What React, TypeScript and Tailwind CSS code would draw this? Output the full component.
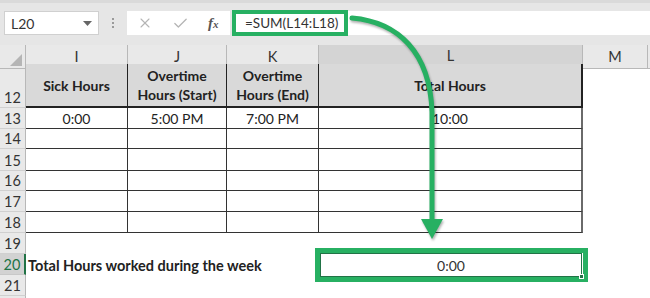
import { X, Check } from "lucide-react";

const grid = "grid grid-cols-[26px_102px_99px_92px_264px_65px_1fr]";

type Row = { n: number; h: string; vals?: string[] };

const tableRows: Row[] = [
  { n: 13, h: "h-[21px]", vals: ["0:00", "5:00 PM", "7:00 PM", "10:00"] },
  { n: 14, h: "h-[20px]" },
  { n: 15, h: "h-[22px]" },
  { n: 16, h: "h-[20px]" },
  { n: 17, h: "h-[21px]" },
  { n: 18, h: "h-[21px]" },
];

function RowHead({ n, active }: { n: number; active?: boolean }) {
  return (
    <div
      className={
        active
          ? "flex items-end justify-center bg-[#d2d2d2] text-[#217346] border-r-2 border-r-[#217346] border-b border-b-[#c8c8c8] text-[14.5px] leading-[19px]"
          : "flex items-end justify-center bg-[#e9e9e9] text-[#333] border-r border-r-[#b8b8b8] border-b border-b-[#d0d0d0] text-[14.5px] leading-[19px]"
      }
    >
      {n}
    </div>
  );
}

function ColHead({ label, active }: { label: string; active?: boolean }) {
  return (
    <div
      className={
        active
          ? "flex items-center justify-center bg-[#d4d4d4] text-[#333] border-r border-r-[#b8b8b8] border-b-2 border-b-[#217346] text-[14.5px]"
          : "flex items-center justify-center bg-[#e9e9e9] text-[#333] border-r border-r-[#b8b8b8] border-b border-b-[#b8b8b8] text-[14.5px]"
      }
    >
      {label}
    </div>
  );
}

export default function App() {
  return (
    <div className="relative w-[650px] h-[298px] overflow-hidden bg-white font-['Lato','Open_Sans',sans-serif] text-[#222]">
      {/* formula bar */}
      <div className="h-[45px] bg-[#e6e6e6] border-t-[3px] border-t-[#dadada] flex items-start pt-[8px]">
        <div className="ml-[4px] w-[95px] h-[24px] bg-white border border-[#d0d0d0] flex items-center justify-between pl-[6px] pr-[6px] text-[14px] text-[#333]">
          <span>L20</span>
          <svg width="9" height="5" viewBox="0 0 9 5">
            <path d="M0 0 L9 0 L4.5 5 Z" fill="#666" />
          </svg>
        </div>
        <div className="w-[28px] h-[24px] flex flex-col items-center justify-center gap-[2px]">
          <span className="w-[2px] h-[2px] bg-[#9a9a9a]" />
          <span className="w-[2px] h-[2px] bg-[#9a9a9a]" />
          <span className="w-[2px] h-[2px] bg-[#9a9a9a]" />
        </div>
        <div className="w-[103px] h-[24px] bg-white flex items-center pl-[10px] gap-[19px]">
          <X size={16} strokeWidth={1.6} className="text-[#b5b5b5]" />
          <Check size={17} strokeWidth={1.8} className="text-[#b5b5b5]" />
          <span className="font-['Liberation_Serif',serif] italic font-bold text-[15px] text-[#555] leading-none">
            f<span className="text-[11px]">x</span>
          </span>
        </div>
        <div className="ml-[2px] flex-1 h-[24px] bg-white">
          <div className="-mt-[1px] w-[116px] h-[26px] border-[4px] border-[#27b062] flex items-center pl-[9px] text-[13.5px] text-[#333]">
            =SUM(L14:L18)
          </div>
        </div>
      </div>

      {/* column headers */}
      <div className={`${grid} h-[19px]`}>
        <div className="relative bg-[#e9e9e9] border-r border-r-[#b8b8b8] border-b border-b-[#b8b8b8]">
          <svg className="absolute right-[3px] bottom-[2px]" width="12" height="12" viewBox="0 0 12 12">
            <path d="M12 0 L12 12 L0 12 Z" fill="#b5b5b5" />
          </svg>
        </div>
        <ColHead label="I" />
        <ColHead label="J" />
        <ColHead label="K" />
        <ColHead label="L" active />
        <ColHead label="M" />
        <div className="bg-[#e9e9e9] border-b border-b-[#b8b8b8]" />
      </div>

      {/* header row 12 */}
      <div className={`${grid} h-[44px]`}>
        <RowHead n={12} />
        <div className="flex items-center justify-center bg-[#d9d9d9] border-r border-r-[#222] border-b-2 border-b-[#222] font-bold text-[14px] text-center leading-[19px]">
          Sick Hours
        </div>
        <div className="flex items-center justify-center bg-[#d9d9d9] border-r border-r-[#222] border-b-2 border-b-[#222] font-bold text-[14px] text-center leading-[19px]">
          Overtime
          <br />
          Hours (Start)
        </div>
        <div className="flex items-center justify-center bg-[#d9d9d9] border-r border-r-[#222] border-b-2 border-b-[#222] font-bold text-[14px] text-center leading-[19px]">
          Overtime
          <br />
          Hours (End)
        </div>
        <div className="flex items-center justify-center bg-[#d9d9d9] border-r-2 border-r-[#222] border-b-2 border-b-[#222] font-bold text-[14px] text-center leading-[19px]">
          Total Hours
        </div>
        <div />
        <div />
      </div>

      {/* body rows */}
      {tableRows.map((r) => (
        <div key={r.n} className={`${grid} ${r.h}`}>
          <RowHead n={r.n} />
          {[0, 1, 2, 3].map((i) => (
            <div
              key={i}
              className={
                i === 3
                  ? "flex items-end justify-center border-r-2 border-r-[#6a6a6a] border-b border-b-[#333] text-[14px] leading-[19px]"
                  : "flex items-end justify-center border-r border-r-[#333] border-b border-b-[#333] text-[14px] leading-[19px]"
              }
            >
              {r.vals?.[i]}
            </div>
          ))}
          <div />
          <div />
        </div>
      ))}

      <div className={`${grid} h-[21px]`}>
        <RowHead n={19} />
      </div>

      <div className={`${grid} h-[21px]`}>
        <RowHead n={20} active />
        <div className="col-span-3 flex items-end pl-[2px] font-bold text-[14.5px] leading-[19px] whitespace-nowrap">
          Total Hours worked during the week
        </div>
        <div className="relative flex items-end justify-center text-[14px] leading-[19px] text-[#333]">
          <div className="absolute -left-[4px] -right-[5px] -top-[6px] -bottom-[7px] border-[5px] border-[#27b062]" />
          <div className="absolute left-[1px] right-[1px] top-[-1px] bottom-[-2px] border border-[#217346]" />
          <div className="absolute -right-[1px] -bottom-[4px] w-[5px] h-[5px] bg-[#217346] border border-white" />
          0:00
        </div>
      </div>

      <div className={`${grid} h-[21px]`}>
        <RowHead n={21} />
      </div>
      <div className={`${grid} h-[10px]`}>
        <div className="bg-[#e9e9e9] border-r border-r-[#b8b8b8]" />
      </div>

      {/* annotation arrow */}
      <svg className="absolute inset-0 pointer-events-none drop-shadow-[1px_2px_1px_rgba(0,0,0,0.3)]" width="650" height="298" viewBox="0 0 650 298">
        <path d="M352 18 C398 22 430 52 432 112 L432 222" fill="none" stroke="#27b062" strokeWidth="5" strokeLinecap="round" />
        <path d="M421 219 L443 219 L432 239 Z" fill="#27b062" />
      </svg>
    </div>
  );
}
